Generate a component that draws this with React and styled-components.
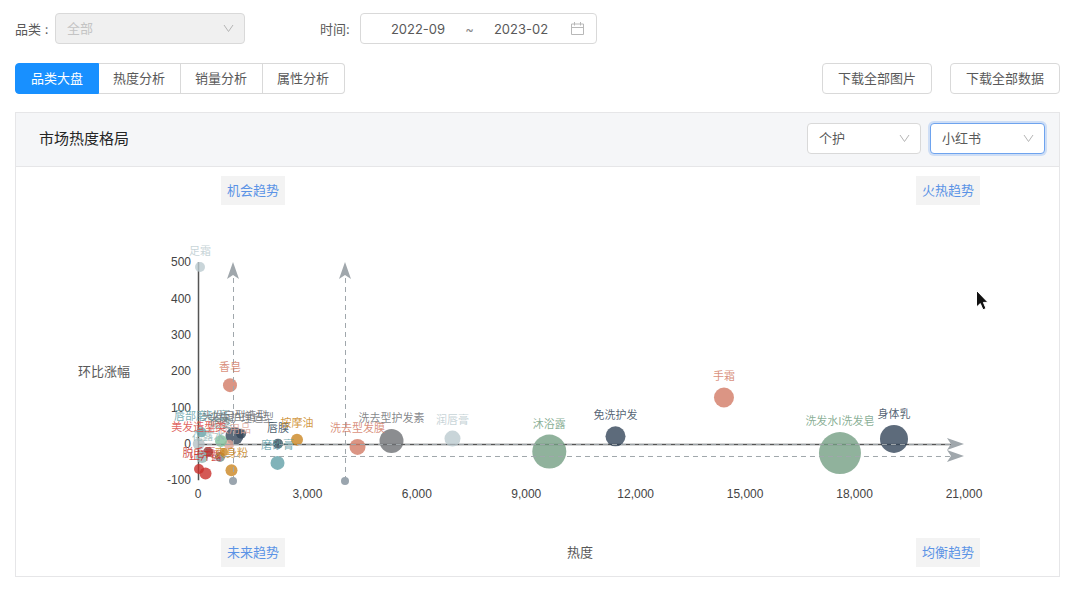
import React, { useState } from "react";
import styled, { createGlobalStyle, css } from "styled-components";

const GlobalStyles = createGlobalStyle`
  * {
    box-sizing: border-box;
  }
  body {
    margin: 0;
    background-color: #fff;
    color: #595959;
    font-family: Inter, "Noto Sans CJK SC", sans-serif;
    font-size: 13px;
    line-height: 20px;
  }
  button, input, select {
    font: inherit;
    color: inherit;
  }
`;

const PageStyles = styled.main`
  padding: 13px 20px 18px 15px;
`;

const Filters = styled.div`
  display: flex;
  align-items: center;
  gap: 75px;
  margin-bottom: 19px;
`;

const Field = styled.div`
  display: flex;
  align-items: center;
`;

const FieldLabel = styled.label`
  width: 40px;
  white-space: nowrap;
`;

const SelectWrap = styled.div`
  position: relative;
  width: ${(props) => props.$width};
  svg {
    position: absolute;
    top: 10px;
    right: 11px;
    pointer-events: none;
  }
`;

const SelectBox = styled.select`
  appearance: none;
  display: block;
  width: 100%;
  height: 31px;
  padding: 0 28px 2px 11px;
  border: 1px solid #d9d9d9;
  border-radius: 4px;
  background-color: #fff;
  outline: none;
  ${(props) =>
    props.$active &&
    css`
      border-color: #6ea3ee;
      box-shadow: 0 0 0 2px rgba(90, 150, 240, 0.25);
    `}
  &:disabled {
    background-color: #f0f0f0;
    color: #c4c4c4;
    opacity: 1;
  }
`;

const RangeBox = styled.div`
  display: flex;
  align-items: center;
  width: 237px;
  height: 31px;
  padding: 0 12px 0 19px;
  border: 1px solid #d9d9d9;
  border-radius: 4px;
  input {
    width: 76px;
    padding: 0;
    border: 0;
    outline: none;
    background: none;
    text-align: center;
    font-size: 13px;
  }
  span {
    flex: 1;
    text-align: center;
    color: #8c8c8c;
  }
  svg {
    margin-left: 12px;
  }
`;

const Toolbar = styled.div`
  display: flex;
  justify-content: space-between;
  align-items: center;
  margin-bottom: 18px;
`;

const Tabs = styled.div`
  display: flex;
`;

const Tab = styled.button`
  height: 31px;
  padding: 0 15px 2px;
  border: 1px solid ${(props) => (props.$active ? "#1890ff" : "#d9d9d9")};
  background-color: ${(props) => (props.$active ? "#1890ff" : "#fff")};
  color: ${(props) => (props.$active ? "#fff" : "#595959")};
  cursor: pointer;
  & + & {
    padding: 0 15px 2px 14px;
    border-left-width: 0;
  }
  &:first-child {
    border-radius: 4px 0 0 4px;
  }
  &:last-child {
    border-radius: 0 4px 4px 0;
  }
`;

const Actions = styled.div`
  display: flex;
  gap: 18px;
`;

const Button = styled.button`
  height: 31px;
  padding: 0 15px 2px;
  border: 1px solid #d9d9d9;
  border-radius: 4px;
  background-color: #fff;
  cursor: pointer;
`;

const Card = styled.section`
  border: 1px solid #e6e6e8;
`;

const CardHeader = styled.header`
  display: flex;
  justify-content: space-between;
  align-items: center;
  height: 54px;
  padding: 0 14px 2px 23px;
  border-bottom: 1px solid #e6e6e8;
  background-color: #f5f6f8;
  h2 {
    margin: 0;
    color: #262626;
    font-size: 15px;
    font-weight: 400;
  }
`;

const HeaderSelects = styled.div`
  display: flex;
  gap: 9px;
`;

const CardBody = styled.div`
  padding: 9px 59px 9px 0;
`;

const TrendRow = styled.div`
  display: grid;
  grid-template-columns: 1fr auto 1fr;
  align-items: center;
  padding-left: 144px;
`;

const TrendTag = styled.a`
  justify-self: ${(props) => (props.$end ? "end" : "start")};
  margin: ${(props) => (props.$end ? "0 20px 0 0" : "0 0 0 61px")};
  padding: 4px 6px 5px;
  background-color: #f3f3f3;
  color: #5b93e6;
  text-decoration: none;
`;

const ChartRow = styled.div`
  position: relative;
  display: flex;
  align-items: center;
  gap: 30px;
  padding-left: 62px;
`;

const YTitle = styled.div`
  flex: 0 0 52px;
  white-space: nowrap;
`;

const ChartSvg = styled.svg`
  display: block;
  flex: 1;
  min-width: 0;
  height: auto;
  .tick {
    fill: #444;
    font: 12px "Liberation Sans", sans-serif;
  }
  .name {
    font: 11px "Noto Sans CJK SC", sans-serif;
    text-anchor: middle;
  }
`;

const Pointer = styled.svg`
  position: absolute;
  top: 84px;
  right: 11px;
`;

const xTicks = [0, 3000, 6000, 9000, 12000, 15000, 18000, 21000];
const yTicks = [500, 400, 300, 200, 100, 0, -100];

const teal = "#61a0a8";
const slate = "#2f4554";
const navy = "#34465a";
const salmon = "#d27b65";
const green = "#749f83";
const amber = "#ca8622";
const pale = "#bccbcf";
const red = "#c9302c";
const grey = "#6e7074";

// name, heat, growth, radius, colour, label colour
const points = [
  ["足霜", 55, 487, 5, pale],
  ["唇部磨砂膏", 96, 32, 5, teal],
  ["头皮护理造型", 1180, 28, 5, slate, grey],
  ["头发定型造型", 1000, 22, 9, navy, grey],
  ["卸妆用品", 850, -2, 5, "#e0a79a"],
  ["喷雾", 630, 8, 6, "#7fbf9b", "#6e8a8c"],
  ["花露水", 274, -22, 5, "#8c3a38", "#91b5b5"],
  ["", 110, -36, 6, "#91b5b5"],
  ["", 603, -36, 5, "#6e8a8c"],
  ["", 713, -22, 4, amber],
  ["美发造型类", 20, 0, 6, "#b4c0c4", "#d94a44"],
  ["脱毛膏", 27, -69, 5, red],
  ["止汗露", 206, -81, 6, red],
  ["爽身粉", 918, -72, 6, amber],
  ["香皂", 877, 162, 7, salmon],
  ["唇膜", 2193, 1, 5, slate],
  ["按摩油", 2714, 12, 6, amber],
  ["磨砂膏", 2180, -52, 7, teal],
  ["洗去型发膜", 4373, -8, 8, salmon],
  ["洗去型护发素", 5305, 8, 12, grey],
  ["润唇膏", 6977, 15, 8, pale],
  ["沐浴露", 9631, -21, 17, green],
  ["免洗护发", 11446, 21, 10, navy],
  ["手霜", 14420, 128, 10, salmon],
  ["洗发水I洗发皂", 17600, -25, 21, green],
  ["身体乳", 19081, 14, 14, navy],
];

const toX = (heat) => 38 + (heat / 21000) * 766;
const toY = (growth) => 239 - growth * 0.3633;

const Chevron = () => (
  <svg width="11" height="11" viewBox="0 0 11 11" fill="none" stroke="#b5b5b5">
    <path d="M1 2l4.5 6.5L10 2" />
  </svg>
);

const CalendarIcon = () => (
  <svg width="13" height="13" viewBox="0 0 13 13" fill="none" stroke="#b8b8b8">
    <path d="M.5 2h12v10.500H.5zM.5 5.500h12M3.500 0v3.500M9.500 0v3.500" />
  </svg>
);

const Select = ({ label, id, options, width, ...rest }) => (
  <SelectWrap $width={width}>
    <SelectBox id={id} aria-label={label} {...rest}>
      {options.map((item) => (
        <option key={item}>{item}</option>
      ))}
    </SelectBox>
    <Chevron />
  </SelectWrap>
);

const Arrow = ({ x, y, rotate = 0 }) => (
  <path
    d="M0 0L6 17L0 13L-6 17Z"
    fill="#a0a7ac"
    transform={`translate(${x} ${y}) rotate(${rotate})`}
  />
);

const HeatChart = () => (
  <ChartSvg viewBox="0 0 840 333" role="img" aria-label="市场热度格局">
    {xTicks.map((value) => (
      <text
        key={value}
        className="tick"
        x={toX(value)}
        y="293"
        textAnchor="middle"
      >
        {value.toLocaleString("en-US")}
      </text>
    ))}
    {yTicks.map((value) => (
      <text
        key={value}
        className="tick"
        x="31"
        y={toY(value) + 4}
        textAnchor="end"
      >
        {value}
      </text>
    ))}
    <path
      d={`M38.500 ${toY(500)}V${toY(-100)}M38 239.500H796`}
      stroke="#555"
      strokeWidth="1.5"
      fill="none"
    />
    {points.map(([name, heat, growth, radius, color], index) => (
      <circle
        key={name + index}
        cx={toX(heat)}
        cy={toY(growth)}
        r={radius}
        fill={color}
        fillOpacity="0.8"
      />
    ))}
    {/* average lines */}
    <g stroke="#a0a7ac" strokeDasharray="5 4" fill="none">
      <path d="M73.500 276V70M185.500 276V70M38 251.500H796M38 239.500H796" />
    </g>
    <circle cx="73" cy="276" r="4" fill="#9aa5ae" />
    <circle cx="185" cy="276" r="4" fill="#9aa5ae" />
    <Arrow x={73} y={57} />
    <Arrow x={185} y={57} />
    <Arrow x={804} y={239} rotate={90} />
    <Arrow x={804} y={251} rotate={90} />
    {points.map(([name, heat, growth, radius, color, textColor], index) => (
      <text
        key={name + index}
        className="name"
        x={toX(heat)}
        y={toY(growth) - radius - 7}
        fill={textColor || color}
        fillOpacity="0.85"
      >
        {name}
      </text>
    ))}
  </ChartSvg>
);

const tabs = ["品类大盘", "热度分析", "销量分析", "属性分析"];

const App = () => {
  const [activeTab, setActiveTab] = useState(tabs[0]);
  return (
    <PageStyles>
      <GlobalStyles />
      <Filters>
        <Field>
          <FieldLabel htmlFor="category">品类 :</FieldLabel>
          <Select id="category" options={["全部"]} width="190px" disabled />
        </Field>
        <Field>
          <FieldLabel htmlFor="start">时间:</FieldLabel>
          <RangeBox>
            <input id="start" defaultValue="2022-09" />
            <span>~</span>
            <input aria-label="结束时间" defaultValue="2023-02" />
            <CalendarIcon />
          </RangeBox>
        </Field>
      </Filters>
      <Toolbar>
        <Tabs>
          {tabs.map((item) => (
            <Tab
              key={item}
              type="button"
              $active={item === activeTab}
              onClick={() => setActiveTab(item)}
            >
              {item}
            </Tab>
          ))}
        </Tabs>
        <Actions>
          <Button type="button">下载全部图片</Button>
          <Button type="button">下载全部数据</Button>
        </Actions>
      </Toolbar>
      <Card>
        <CardHeader>
          <h2>市场热度格局</h2>
          <HeaderSelects>
            <Select label="类目" options={["个护", "美妆"]} width="114px" />
            <Select
              label="平台"
              options={["小红书", "抖音"]}
              width="115px"
              $active
            />
          </HeaderSelects>
        </CardHeader>
        <CardBody>
          <TrendRow>
            <TrendTag href="#chance">机会趋势</TrendTag>
            <span />
            <TrendTag href="#hot" $end>
              火热趋势
            </TrendTag>
          </TrendRow>
          <ChartRow>
            <YTitle>环比涨幅</YTitle>
            <HeatChart />
            <Pointer width="14" height="24" viewBox="0 0 14 24">
              <path
                d="M1.500 1.500V18L5.300 14.600L8 20.800L11 19.500L8.400 13.400H13Z"
                fill="#111"
                stroke="#fff"
              />
            </Pointer>
          </ChartRow>
          <TrendRow>
            <TrendTag href="#future">未来趋势</TrendTag>
            <span>热度</span>
            <TrendTag href="#balance" $end>
              均衡趋势
            </TrendTag>
          </TrendRow>
        </CardBody>
      </Card>
    </PageStyles>
  );
};

export default App;
